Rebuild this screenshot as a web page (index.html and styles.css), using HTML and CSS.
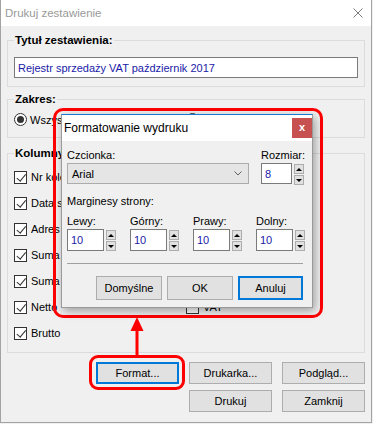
FILE: index.html
```html
<!DOCTYPE html>
<html lang="pl">
<head>
<meta charset="utf-8">
<title>Drukuj zestawienie</title>
<link rel="stylesheet" href="styles.css">
</head>
<body>
<div class="window">
  <div class="titlebar">
    <span class="title">Drukuj zestawienie</span>
    <svg class="x-icon" width="10" height="10" viewBox="0 0 10 10"><path d="M0.5 0.5 L9.5 9.5 M9.5 0.5 L0.5 9.5" stroke="#7a7a7a" stroke-width="1" fill="none"/></svg>
  </div>
  <div class="client">
    <fieldset class="group g-title">
      <legend>Tytuł zestawienia:</legend>
      <div class="textbox wide">Rejestr sprzedaży VAT październik 2017</div>
    </fieldset>
    <fieldset class="group g-range">
      <legend>Zakres:</legend>
      <div class="radios">
        <div class="radio"><span class="rb on"></span><span>Wszystkie</span></div>
        <div class="radio"><span class="rb"></span></div>
      </div>
    </fieldset>
    <fieldset class="group g-cols">
      <legend>Kolumny</legend>
      <div class="cols">
        <div class="col">
          <div class="check"><span class="cb on"></span><span>Nr kolejny</span></div>
          <div class="check"><span class="cb on"></span><span>Data sprzedaży</span></div>
          <div class="check"><span class="cb on"></span><span>Adres</span></div>
          <div class="check"><span class="cb on"></span><span>Suma netto</span></div>
          <div class="check"><span class="cb on"></span><span>Suma brutto</span></div>
          <div class="check"><span class="cb on"></span><span>Netto</span></div>
          <div class="check"><span class="cb on"></span><span>Brutto</span></div>
        </div>
        <div class="col">
          <div class="check"><span class="cb on"></span></div>
          <div class="check"><span class="cb on"></span></div>
          <div class="check"><span class="cb on"></span></div>
          <div class="check"><span class="cb on"></span></div>
          <div class="check"><span class="cb on"></span></div>
          <div class="check"><span class="cb"></span><span>VAT</span></div>
        </div>
      </div>
    </fieldset>
    <div class="buttons">
      <button class="btn default c1">Format...</button>
      <button class="btn">Drukarka...</button>
      <button class="btn">Podgląd...</button>
      <button class="btn c2">Drukuj</button>
      <button class="btn">Zamknij</button>
    </div>
  </div>
</div>

<div class="ring ring-dialog"></div>

<div class="dialog">
  <div class="dlg-title">
    <span>Formatowanie wydruku</span>
    <span class="dlg-close">x</span>
  </div>
  <div class="dlg-body">
    <div class="row-font">
      <div class="field">
        <div class="lbl">Czcionka:</div>
        <div class="select"><span>Arial</span>
          <svg width="8" height="5" viewBox="0 0 8 5"><path d="M0.5 0.5 L4 4 L7.5 0.5" stroke="#606060" stroke-width="1" fill="none"/></svg>
        </div>
      </div>
      <div class="field">
        <div class="lbl">Rozmiar:</div>
        <div class="spin"><div class="textbox sz">8</div><div class="arrows"><span class="ar up"></span><span class="ar down"></span></div></div>
      </div>
    </div>
    <div class="lbl section">Marginesy strony:</div>
    <div class="margins">
      <div class="field">
        <div class="lbl">Lewy:</div>
        <div class="spin"><div class="textbox mg">10</div><div class="arrows"><span class="ar up"></span><span class="ar down"></span></div></div>
      </div>
      <div class="field">
        <div class="lbl">Górny:</div>
        <div class="spin"><div class="textbox mg">10</div><div class="arrows"><span class="ar up"></span><span class="ar down"></span></div></div>
      </div>
      <div class="field">
        <div class="lbl">Prawy:</div>
        <div class="spin"><div class="textbox mg">10</div><div class="arrows"><span class="ar up"></span><span class="ar down"></span></div></div>
      </div>
      <div class="field">
        <div class="lbl">Dolny:</div>
        <div class="spin"><div class="textbox mg">10</div><div class="arrows"><span class="ar up"></span><span class="ar down"></span></div></div>
      </div>
    </div>
    <div class="sep"></div>
    <div class="dlg-buttons">
      <button class="btn dbtn">Domyślne</button>
      <button class="btn dbtn">OK</button>
      <button class="btn dbtn default">Anuluj</button>
    </div>
  </div>
</div>

<div class="ring ring-format"></div>
<svg class="arrow" width="18" height="41" viewBox="0 0 18 41">
  <path d="M9 1 L15.5 15 L2.5 15 Z" fill="#ff0000"/>
  <rect x="7.5" y="13" width="3" height="28" fill="#ff0000"/>
</svg>
</body>
</html>
```

FILE: styles.css
```css
* { box-sizing: border-box; }
html, body { margin: 0; padding: 0; }
body {
  width: 373px;
  height: 424px;
  overflow: hidden;
  position: relative;
  background: #f0f0f0;
  font-family: "Liberation Sans", Arial, sans-serif;
  font-size: 11px;
  color: #000;
}

.window {
  width: 372px;
  height: 423px;
  border: 1px solid #a3a3a3;
  border-top: none;
  background: #f0f0f0;
  display: flex;
  flex-direction: column;
}
.titlebar {
  flex: none;
  height: 26px;
  background: #fff;
  display: flex;
  align-items: center;
  justify-content: space-between;
  padding: 0 8px 0 4px;
}
.title { font-size: 11.5px; color: #9a9a9a; }
.x-icon { display: block; }

.client {
  padding: 7px 6px 0 6px;
  display: flex;
  flex-direction: column;
}
.group {
  margin: 0;
  padding: 10px 6px 8px 6px;
  border: 1px solid #dcdcdc;
  min-width: 0;
}
.group legend {
  padding: 0 1px;
  font-weight: bold;
  font-size: 11.5px;
  line-height: 14px;
}
.g-range { margin-top: 5px; padding-top: 7px; padding-bottom: 11px; }
.g-cols { margin-top: 8px; padding-top: 4px; padding-bottom: 6px; }

.textbox {
  background: #fff;
  border: 1px solid #7a7a7a;
  color: #1a1aa8;
  padding: 0 3px;
  display: flex;
  align-items: center;
}
.textbox.wide { height: 21px; width: 344px; padding-left: 3px; }

.radios { display: flex; }
.radio { display: flex; align-items: center; gap: 3px; height: 13px; width: 182px; }
.rb {
  width: 13px; height: 13px;
  border: 1px solid #333;
  border-radius: 50%;
  background: #fff;
  display: grid;
  place-items: center;
  flex: none;
}
.rb.on::after {
  content: "";
  width: 7px; height: 7px;
  border-radius: 50%;
  background: #333;
}

.cols { display: grid; grid-template-columns: 172px 1fr; }
.check { height: 26px; display: flex; align-items: center; gap: 4px; }
.cb {
  width: 13px; height: 13px;
  border: 1px solid #333;
  background: #fff;
  position: relative;
  flex: none;
}
.cb.on::after {
  content: "";
  position: absolute;
  left: 3.5px; top: 0.5px;
  width: 3.5px; height: 7.5px;
  border: solid #333;
  border-width: 0 1.3px 1.3px 0;
  transform: rotate(40deg);
}

.buttons {
  margin-top: 9px;
  display: grid;
  grid-template-columns: repeat(3, 83px);
  column-gap: 10px;
  row-gap: 6px;
  justify-content: end;
}
.btn {
  margin: 0;
  height: 22px;
  background: #e1e1e1;
  border: 1px solid #adadad;
  font-family: "Liberation Sans", Arial, sans-serif;
  font-size: 11px;
  color: #000;
  padding: 0;
}
.btn.default { border: 2px solid #0078d7; }
.c2 { grid-column: 2; }

/* dialog */
.dialog {
  position: absolute;
  left: 61px;
  top: 114px;
  width: 252px;
  height: 194px;
  background: #f0f0f0;
  border: 1px solid #9a9a9a;
  border-top-color: #1b7ad3;
  box-shadow: 2px 3px 9px rgba(0,0,0,0.35);
  display: flex;
  flex-direction: column;
}
.dlg-title {
  height: 26px;
  background: #fff;
  display: flex;
  align-items: center;
  justify-content: space-between;
  padding-left: 2px;
  font-size: 12px;
  flex: none;
}
.dlg-close {
  width: 20px; height: 20px;
  background: #c75050;
  color: #fff;
  font-weight: bold;
  font-size: 11px;
  display: grid;
  place-items: center;
  line-height: 1;
  padding-bottom: 2px;
}
.dlg-body {
  padding: 7px 0 0 5px;
  display: flex;
  flex-direction: column;
}
.lbl { line-height: 14px; height: 14px; margin-bottom: 1px; white-space: nowrap; }
.row-font { display: flex; gap: 12px; }
.select {
  width: 182px;
  height: 21px;
  background: #e5e5e5;
  border: 1px solid #acacac;
  display: flex;
  align-items: center;
  justify-content: space-between;
  padding: 0 6px 0 4px;
}
.select svg { display: block; }
.spin { display: flex; align-items: flex-start; gap: 2px; }
.textbox.sz { width: 31px; height: 21px; }
.textbox.mg { width: 37px; height: 22px; }
.arrows { display: flex; flex-direction: column; gap: 1px; padding-top: 1px; }
.ar {
  width: 10px; height: 10px;
  background: #e1e1e1;
  border: 1px solid #adadad;
  display: grid;
  place-items: center;
}
.ar::after {
  content: "";
  width: 0; height: 0;
  border-left: 3px solid transparent;
  border-right: 3px solid transparent;
}
.ar.up::after { border-bottom: 3px solid #000; }
.ar.down::after { border-top: 3px solid #000; }
.section { margin-top: 9px; }
.margins { margin-top: 5px; display: grid; grid-template-columns: repeat(4, 63px); }
.sep { margin: 12px 9px 0 0; height: 1px; background: #a0a0a0; }
.dlg-buttons { margin: 12px 9px 0 0; display: flex; justify-content: flex-end; gap: 5px; }
.dbtn { width: 66px; height: 24px; }
.dbtn.default { width: 65px; }

/* annotations */
.ring {
  position: absolute;
  border: 3px solid #ff0000;
  border-radius: 10px;
}
.ring-dialog { left: 53px; top: 108px; width: 270px; height: 210px; }
.ring-format { left: 89px; top: 355px; width: 96px; height: 35px; border-radius: 9px; }
.arrow { position: absolute; left: 128px; top: 316px; display: block; }
```
